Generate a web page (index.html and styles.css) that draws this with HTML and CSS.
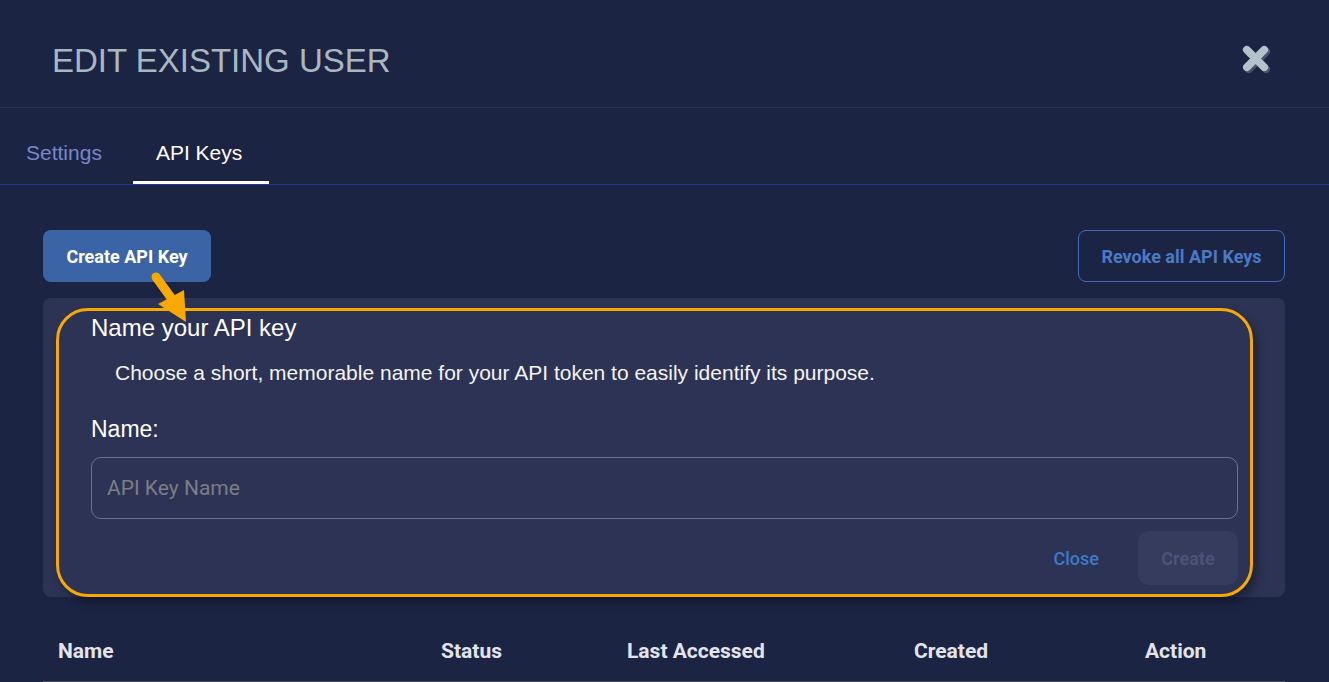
FILE: index.html
```html
<!DOCTYPE html>
<html lang="en">
  <head>
    <meta charset="UTF-8" />
    <meta name="viewport" content="width=device-width, initial-scale=1.0" />
    <title>Edit Existing User</title>
    <link rel="stylesheet" href="styles.css">
  </head>
  <body>
    <header class="header">
      <h1 class="title">EDIT EXISTING USER</h1>
      <button class="close-icon" aria-label="Close">
        <svg width="32" height="32" viewBox="0 0 32 32">
          <g stroke-width="8" stroke-linecap="round">
            <path d="M6 6 L24 24 M24 6 L6 24" stroke="#4c5372" transform="translate(2 2)" />
            <path d="M6 6 L24 24 M24 6 L6 24" stroke="#b4c2ca" />
          </g>
        </svg>
      </button>
    </header>

    <nav class="tabs">
      <div class="tab">Settings</div>
      <div class="tab active">API Keys</div>
    </nav>

    <main class="content">
      <div class="actions">
        <button class="btn btn-primary">Create API Key</button>
        <button class="btn btn-outline">Revoke all API Keys</button>
      </div>

      <section class="panel">
        <div class="form-box">
          <h2 class="form-title">Name your API key</h2>
          <p class="form-desc">Choose a short, memorable name for your API token to easily identify its purpose.</p>
          <label class="form-label" for="keyName">Name:</label>
          <input class="form-input" id="keyName" type="text" placeholder="API Key Name">
          <div class="form-footer">
            <button class="btn-text">Close</button>
            <button class="btn btn-disabled" disabled>Create</button>
          </div>
        </div>
      </section>

      <table class="keys-table">
        <thead>
          <tr>
            <th class="col-name">Name</th>
            <th class="col-status">Status</th>
            <th class="col-access">Last Accessed</th>
            <th class="col-created">Created</th>
            <th class="col-action">Action</th>
          </tr>
        </thead>
        <tbody></tbody>
      </table>
    </main>

    <!-- annotation arrow pointing at the form -->
    <svg class="arrow" width="60" height="60" viewBox="140 268 60 60">
      <path d="M156 277 L172 299" stroke="#f7a900" stroke-width="9" stroke-linecap="round" />
      <polygon points="158,304 184,290 186,322" fill="#f7a900" />
    </svg>
  </body>
</html>
```

FILE: styles.css
```css
body {
    margin: 0;
    background-color: #1c2444;
    font-family: "Liberation Sans", Arial, sans-serif;
    color: #ffffff;
    overflow: hidden;
}

button {
    font-family: Roboto, "Liberation Sans", sans-serif;
    cursor: pointer;
}

.header {
    height: 108px;
    box-sizing: border-box;
    display: flex;
    justify-content: space-between;
    align-items: flex-start;
    padding: 42px 57px 0 52px;
    border-bottom: 1px solid #2c3453;
}

.title {
    margin: 0;
    font-size: 33px;
    line-height: 38px;
    font-weight: normal;
    color: #a9b7bf;
}

.close-icon {
    background: none;
    border: none;
    padding: 0;
    margin-top: 2px;
    width: 31px;
    height: 31px;
}

.close-icon svg {
    width: 31px;
    height: 31px;
}

.tabs {
    display: flex;
    gap: 6px;
    padding-left: 1px;
    border-bottom: 1px solid #22349c;
}

.tab {
    box-sizing: border-box;
    height: 76px;
    padding: 33px 25px 0;
    font-size: 21px;
    line-height: 24px;
    color: #7986cb;
    border-bottom: 3px solid transparent;
}

.tab.active {
    padding: 33px 27px 0 23px;
    color: #ffffff;
    border-bottom-color: #ffffff;
}

.content {
    padding: 45px 44px 0 43px;
}

.actions {
    display: flex;
    justify-content: space-between;
    align-items: center;
}

.btn {
    height: 52px;
    border-radius: 8px;
    font-size: 18px;
    font-weight: 700;
    border: 1px solid transparent;
}

.btn-primary {
    width: 168px;
    background-color: #3b64a6;
    color: #ffffff;
}

.btn-outline {
    width: 207px;
    background: transparent;
    border-color: #3f6dbd;
    color: #4a79c6;
}

.panel {
    margin-top: 16px;
    background-color: #2c3355;
    border-radius: 8px;
    padding: 10px 32px 0 13px;
}

.form-box {
    border: 3px solid #f7a900;
    border-radius: 32px;
    padding: 3px 12px 9px 32px;
    box-shadow: 4px 6px 10px rgba(0, 0, 0, 0.35);
    display: flex;
    flex-direction: column;
}

.form-title {
    margin: 0;
    font-size: 24px;
    line-height: 28px;
    font-weight: normal;
}

.form-desc {
    margin: 19px 0 0 24px;
    font-size: 21px;
    line-height: 24px;
    color: #f4f4f6;
}

.form-label {
    margin-top: 31px;
    font-size: 23px;
    line-height: 26px;
}

.form-input {
    margin-top: 15px;
    height: 62px;
    box-sizing: border-box;
    border: 1px solid #6a7190;
    border-radius: 10px;
    background: transparent;
    padding: 0 15px;
    font-family: Roboto, sans-serif;
    font-size: 21px;
    color: #ffffff;
}

.form-input::placeholder {
    color: #7c7d85;
}

.form-footer {
    display: flex;
    justify-content: flex-end;
    align-items: center;
    margin-top: 12px;
    gap: 19px;
}

.btn-text {
    height: 54px;
    padding: 0 20px;
    background: none;
    border: none;
    font-size: 18px;
    font-weight: 500;
    color: #3f79c9;
}

.btn-disabled {
    width: 100px;
    height: 54px;
    border-radius: 10px;
    background-color: #353c5e;
    color: #4b5379;
    cursor: default;
}

.keys-table {
    width: 100%;
    margin-top: 16px;
    border-collapse: collapse;
    table-layout: fixed;
}

.keys-table th {
    box-sizing: border-box;
    padding: 26px 15px 18px;
    text-align: left;
    font-family: Roboto, sans-serif;
    font-size: 21px;
    line-height: 24px;
    font-weight: 700;
    color: #e3e4eb;
    border-bottom: 1px solid #4a4b56;
}

.col-name { width: 383px; }
.col-status { width: 186px; }
.col-access { width: 287px; }
.col-created { width: 231px; }

.arrow {
    position: absolute;
    left: 140px;
    top: 268px;
}
```
